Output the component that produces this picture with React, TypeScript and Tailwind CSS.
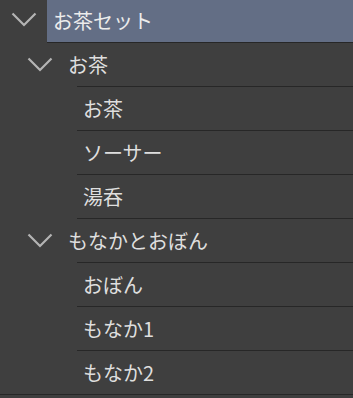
const font = { fontFamily: '"Noto Sans CJK JP", "Noto Sans", sans-serif' }

function Chevron() {
  return (
    <svg width="26" height="15" viewBox="0 0 26 15" className="shrink-0">
      <polyline points="1.5,1.5 13,13 24.5,1.5" fill="none" stroke="#b4b4b4" strokeWidth="2.2" />
    </svg>
  )
}

function Line({ ml }: { ml: string }) {
  return <div className={`${ml} h-px bg-[#272727]`} />
}

function Group({ label, items }: { label: string; items: string[] }) {
  return (
    <>
      <div className="h-[43px] flex items-center pl-[27px]">
        <Chevron />
        <span className="ml-[15px] text-[20px] text-[#dedede]">{label}</span>
      </div>
      <Line ml="ml-[77px]" />
      {items.map((it, i) => (
        <div key={i}>
          <div className="h-[43px] flex items-center pl-[83px] text-[20px] text-[#dedede]">{it}</div>
          {i < items.length - 1 && <Line ml="ml-[77px]" />}
        </div>
      ))}
    </>
  )
}

export default function App() {
  return (
    <div className="w-[353px] h-[398px] bg-[#3f3f3f] overflow-hidden leading-none" style={font}>
      <div className="h-[42px] flex items-stretch pl-[11px]">
        <div className="w-[26px] flex items-center pb-[4px]">
          <Chevron />
        </div>
        <div className="ml-[10px] flex-1 bg-[#636e85] flex items-center pl-[6px] text-[20px] text-[#ececec]">
          お茶セット
        </div>
      </div>
      <Line ml="ml-[47px]" />
      <Group label="お茶" items={["お茶", "ソーサー", "湯呑"]} />
      <Line ml="ml-[77px]" />
      <Group label="もなかとおぼん" items={["おぼん", "もなか1", "もなか2"]} />
      <Line ml="ml-0" />
    </div>
  )
}
